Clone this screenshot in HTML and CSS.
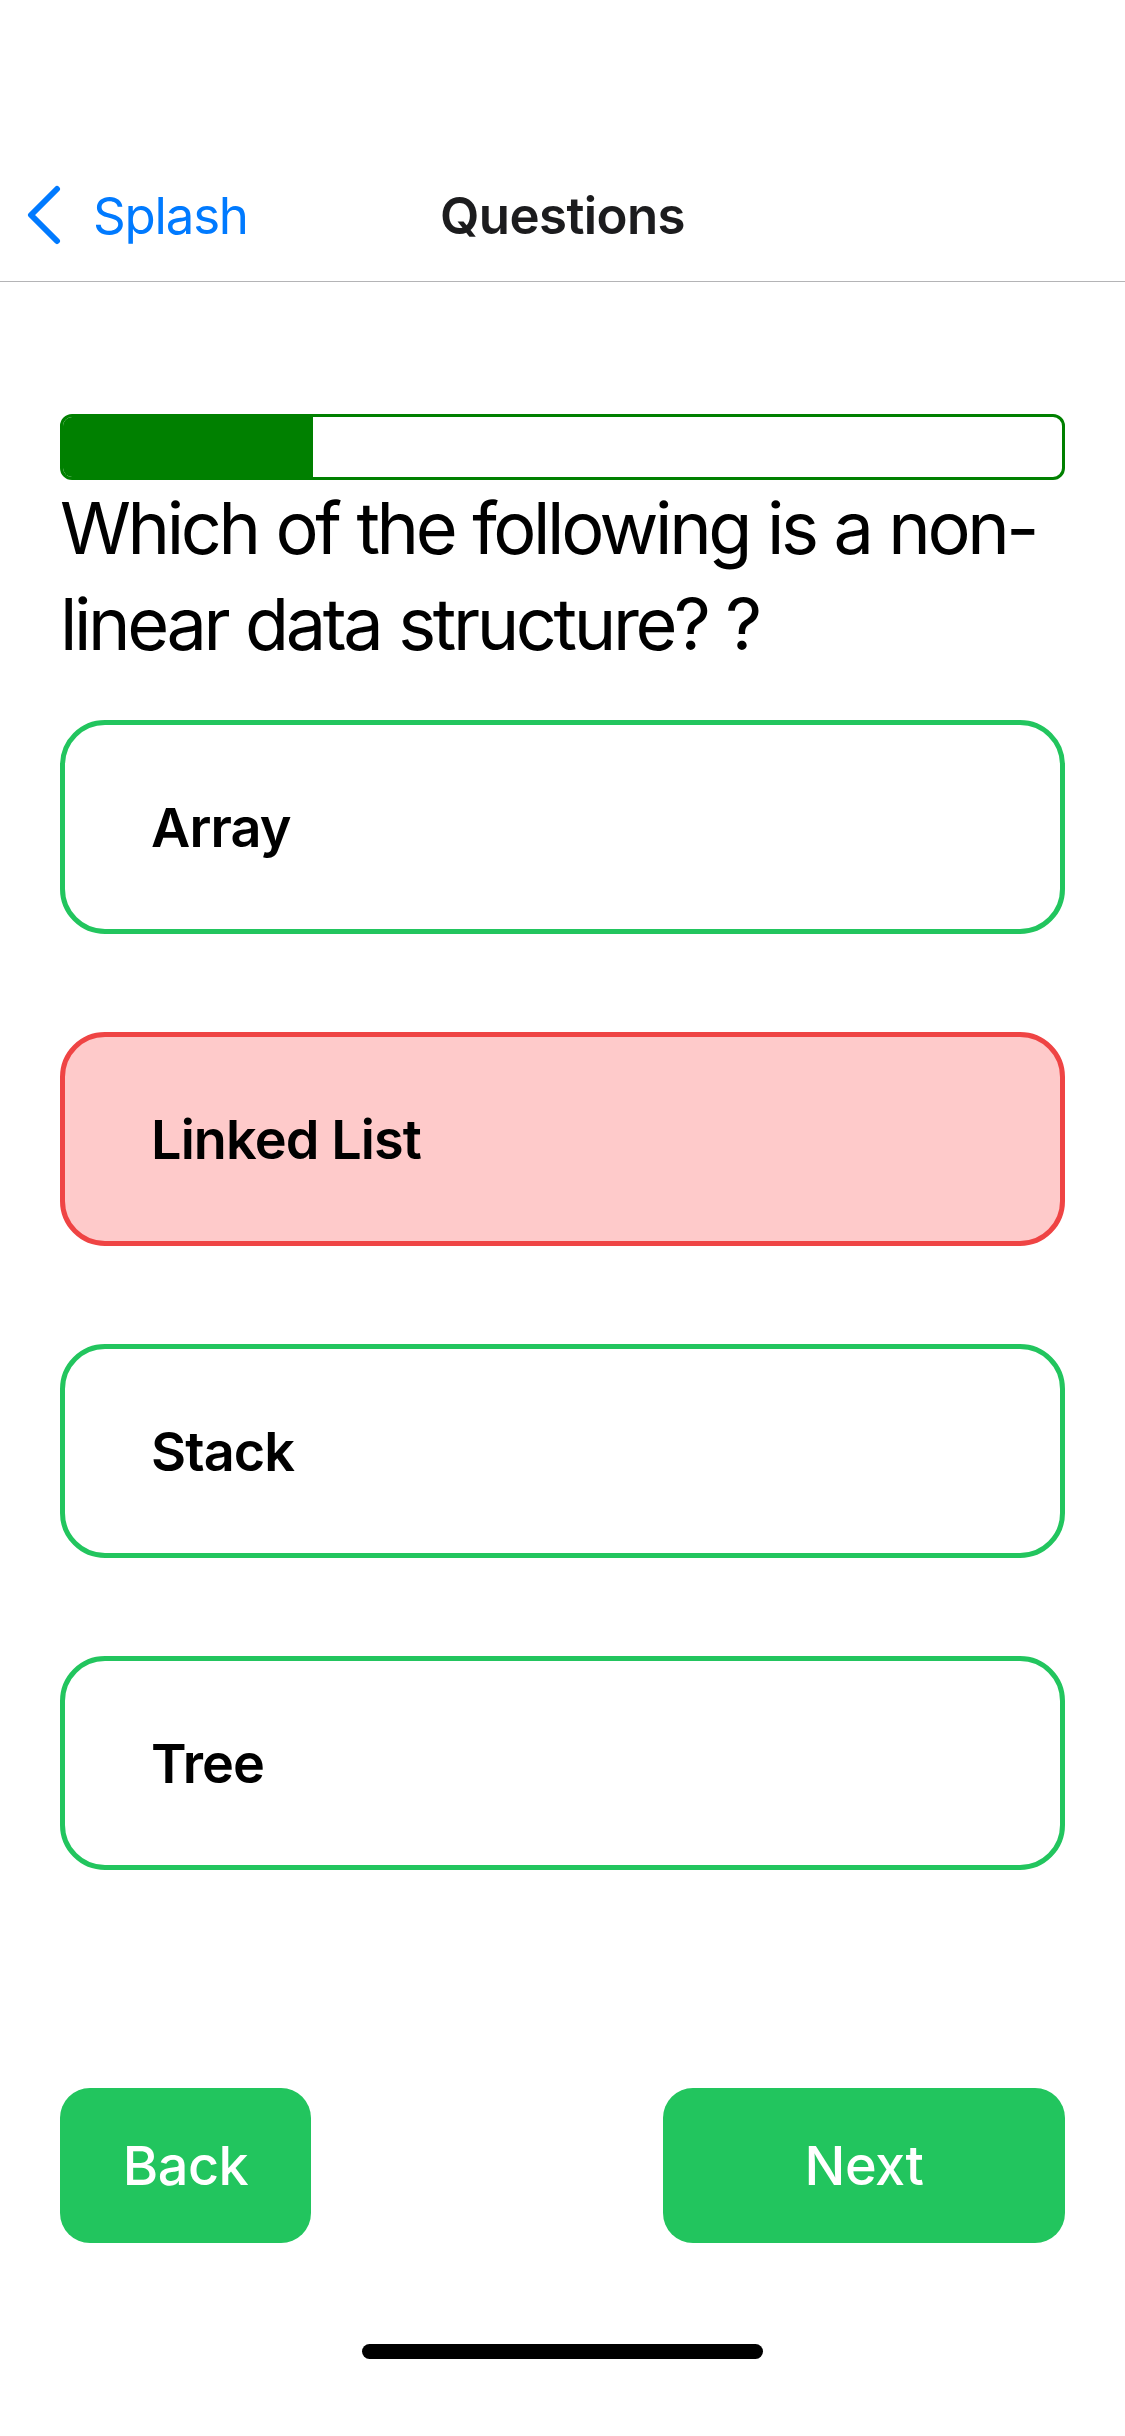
FILE: index.html
```html
<!DOCTYPE html>
<html lang="en">
<head>
<meta charset="utf-8">
<title>Questions</title>
<link rel="stylesheet" href="styles.css">
</head>
<body>
<div class="screen">
  <header class="header">
    <nav class="navbar">
      <a class="back-link" href="#">
        <svg class="chevron" width="40" height="60" viewBox="0 0 40 60">
          <polyline points="32,4 6,30 32,56" fill="none" stroke="#007AFF" stroke-width="6" stroke-linecap="round" stroke-linejoin="round"/>
        </svg>
        <span class="back-text">Splash</span>
      </a>
      <div class="nav-title">Questions</div>
    </nav>
  </header>

  <main class="content">
    <div class="progress">
      <div class="progress-fill" style="width: 25%"></div>
    </div>
    <h1 class="question">Which of the following is a non-linear data structure? ?</h1>

    <ul class="options">
      <li class="option">Array</li>
      <li class="option option-wrong">Linked List</li>
      <li class="option">Stack</li>
      <li class="option">Tree</li>
    </ul>

    <div class="actions">
      <button class="btn btn-back">Back</button>
      <button class="btn btn-next">Next</button>
    </div>
  </main>

  <div class="home-area">
    <div class="home-indicator"></div>
  </div>
</div>
</body>
</html>
```

FILE: styles.css
```css
* { box-sizing: border-box; }

html, body {
  margin: 0;
  padding: 0;
  background: #ffffff;
}

body {
  font-family: Inter, "Noto Sans", "Liberation Sans", sans-serif;
  color: #000;
}

.screen {
  width: 1125px;
  height: 2436px;
  display: flex;
  flex-direction: column;
  overflow: hidden;
}

.header {
  padding-top: 149px;
  border-bottom: 1px solid #b4b4b6;
  background: #fff;
}

.navbar {
  position: relative;
  height: 132px;
  display: flex;
  align-items: center;
}

.back-link {
  display: flex;
  align-items: center;
  text-decoration: none;
  color: #007AFF;
  padding-left: 25px;
  gap: 28px;
}

.chevron { display: block; }

.back-text {
  font-size: 51px;
  letter-spacing: -1.2px;
  line-height: 1;
}

.nav-title {
  position: absolute;
  left: 0;
  right: 0;
  top: 0;
  bottom: 0;
  display: flex;
  align-items: center;
  justify-content: center;
  font-size: 51px;
  font-weight: 600;
  color: #1c1c1e;
  letter-spacing: -0.6px;
  pointer-events: none;
}

.content {
  flex: 1;
  display: flex;
  flex-direction: column;
  padding: 132px 60px 0 60px;
}

.progress {
  height: 66px;
  border: 3px solid #008000;
  border-radius: 12px;
  overflow: hidden;
  background: #fff;
}

.progress-fill {
  height: 100%;
  background: #008000;
}

.question {
  margin: 0;
  font-size: 72px;
  font-weight: 400;
  line-height: 96px;
  letter-spacing: -3.4px;
  word-spacing: 1px;
  color: #000;
}

.options {
  list-style: none;
  margin: 48px 0 0 0;
  padding: 0;
  display: flex;
  flex-direction: column;
  gap: 98px;
}

.option {
  height: 214px;
  border: 5.5px solid #22C55E;
  border-radius: 45px;
  background: #fff;
  display: flex;
  align-items: center;
  padding-left: 86px;
  font-size: 54px;
  font-weight: 600;
  letter-spacing: -0.9px;
  color: #000;
}

.option-wrong {
  border-color: #EF4444;
  background: #FECACA;
}

.actions {
  margin-top: 218px;
  display: flex;
  justify-content: space-between;
}

.btn {
  height: 155px;
  border: none;
  border-radius: 30px;
  background: #22C55E;
  color: #fff;
  font-family: inherit;
  font-size: 54px;
  font-weight: 500;
  letter-spacing: -0.5px;
  padding: 0;
}

.btn-back { width: 251px; }
.btn-next { width: 402px; }

.home-area {
  height: 92px;
  display: flex;
  justify-content: center;
}

.home-indicator {
  width: 401px;
  height: 15px;
  border-radius: 8px;
  background: #000;
}
```
